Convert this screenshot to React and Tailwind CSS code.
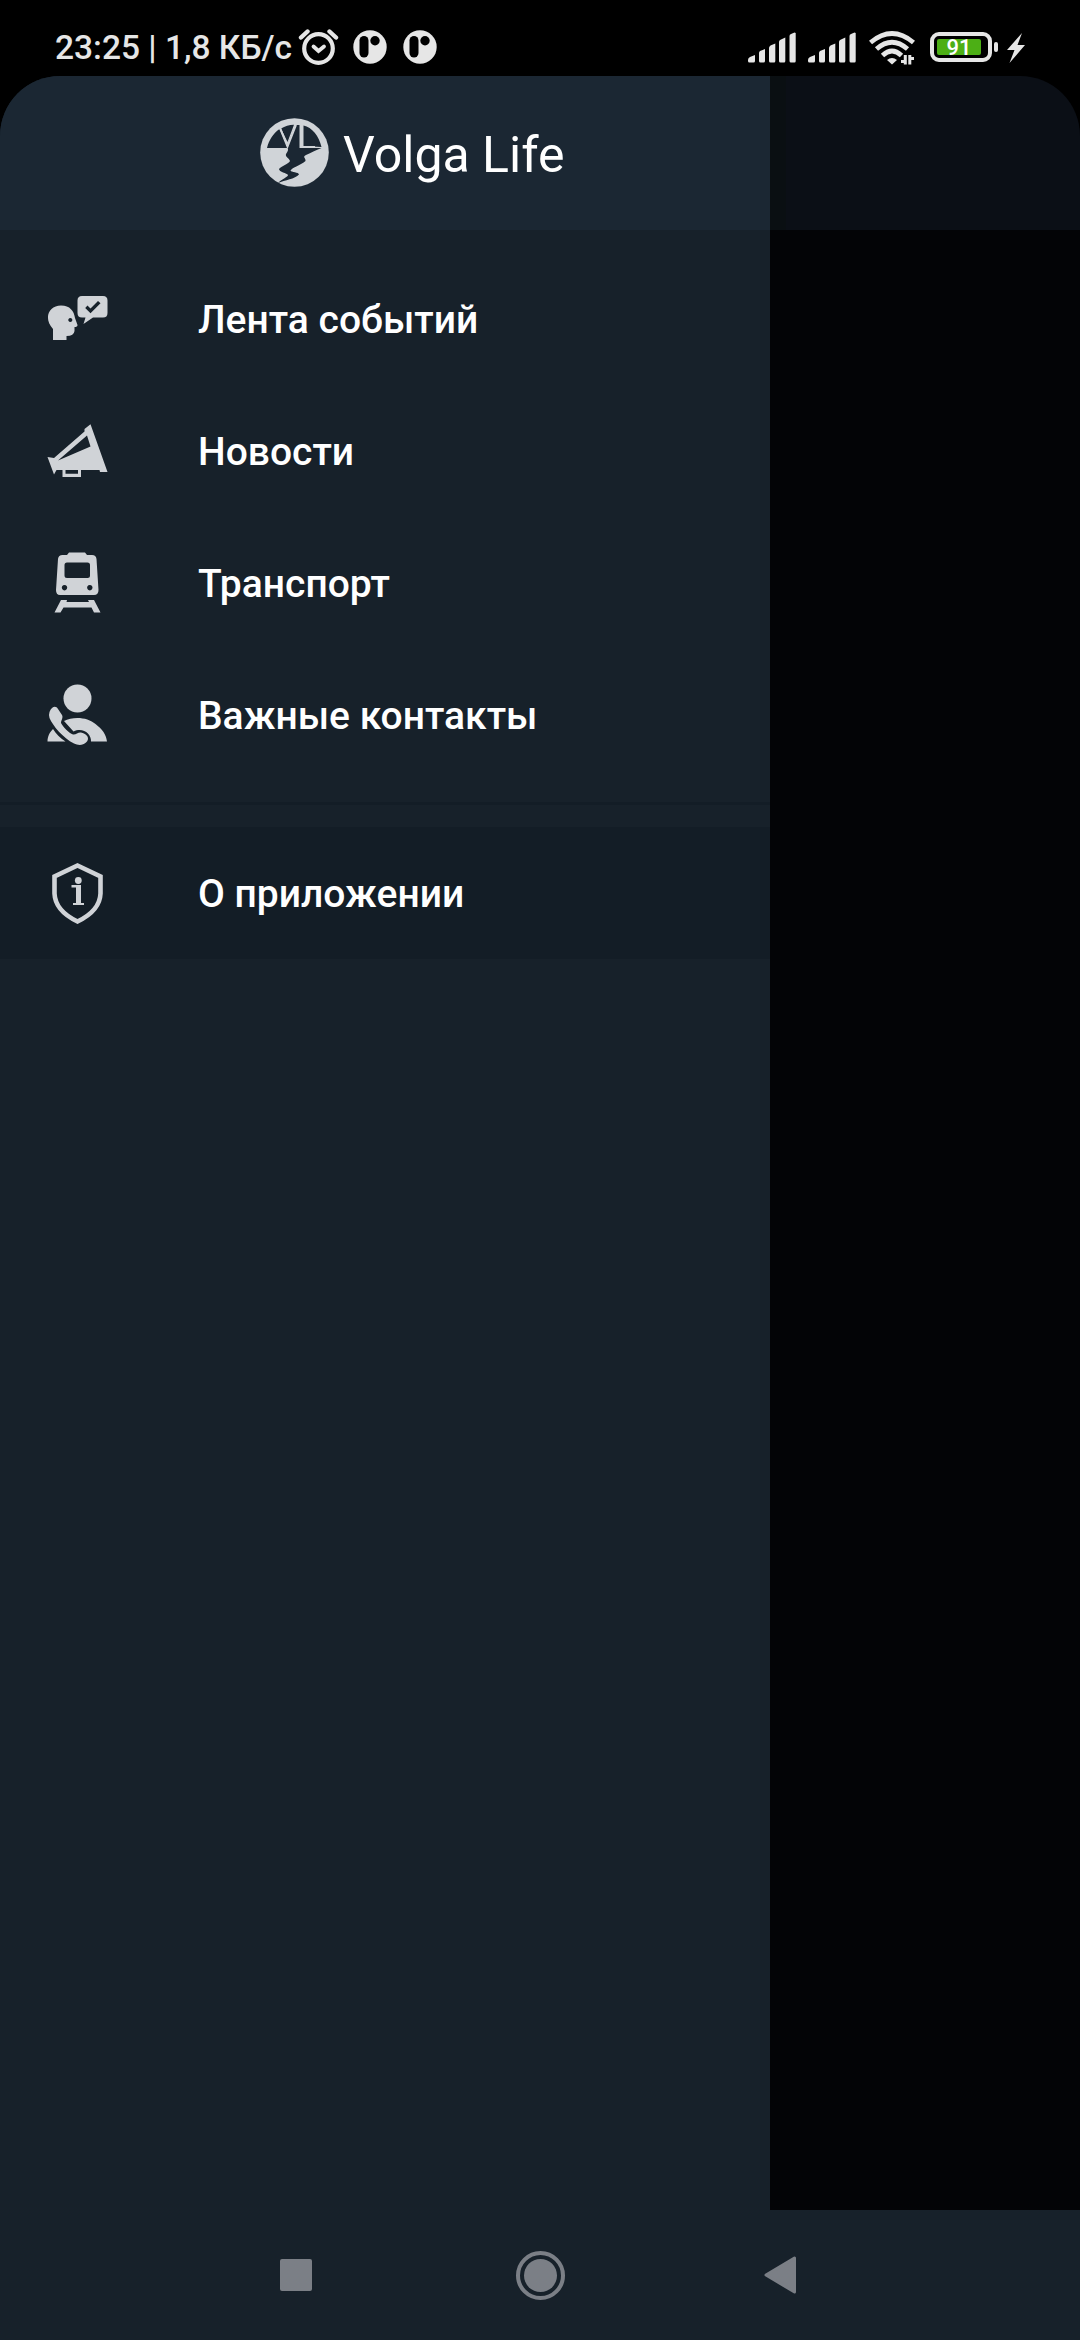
const G = "#d0d3d7";
const W = "#e6e6e6";

function Logo() {
  return (
    <svg width="70" height="70" viewBox="0 0 70 70">
      <circle cx="34.5" cy="34.5" r="34.3" fill="#d0d4d8" />
      <path d="M7 30C9 22 13 15.5 19.500 11L27 28L35.500 7H39.500V30H61.500C57 32 51 34.500 46 37C42 39 46 40 45.500 43C41 47 32 49.500 30.500 52.500C31 54.500 39 54 39 56.500C35 61 25 62 18 65C22 61 28 59 28 57C27 55 19 54 19 51C21 48 29 46 30 43C29 40 25 39 26 36C28 33 29 31 27 30Z" fill="#1b2733" />
      <path d="M21 10.500C25 8.200 29 7 34 6.800L27.500 24ZM43.500 7.600C52 9.500 59 18 61.500 29L43.500 28Z" fill="#1b2733" />
      <path d="M20 10L27.500 28.500L36 7M41.500 7V29H55" fill="none" stroke="#d0d4d8" strokeWidth="2" />
    </svg>
  );
}

function Talk() {
  return (
    <svg width="62" height="62" viewBox="0 0 62 62" fill={G}>
      <path fillRule="evenodd" d="M6 52V41C-4 30 2 17.500 14 17.500C23 17.500 27 23 28 30L30.500 37Q30.500 39 27.500 39V43Q27 48 19.500 48V52ZM23.300 30a2 2 0 1 0 .01 0Z" />
      <path fillRule="evenodd" d="M35 8H56Q60.500 8 60.500 12.500V25Q60.500 29.500 56 29.500H46L36.500 36L38.500 29.500H35Q30.500 29.500 30.500 25V12.500Q30.500 8 35 8ZM40.500 17.500L38.200 20L43.500 25.300L53.500 15.300L51 13L43.500 20.500Z" />
    </svg>
  );
}

function Megaphone() {
  return (
    <svg width="62" height="62" viewBox="0 3 62 62" fill={G}>
      <path fillRule="evenodd" d="M.5 40L7 41L37.500 14.500V12L43.500 7.300L60.500 55H53L52.500 53H34V60H15.500V53H9.500L7 57.500ZM11 43.500L43.500 29.500L40 18.500ZM18.500 53V56.700H31V53Z" />
    </svg>
  );
}

function Train() {
  return (
    <svg width="62" height="62" viewBox="0 0 62 62" fill={G}>
      <path fillRule="evenodd" d="M22 .5H38L40 3H45Q49 3 49.500 7L51.500 38Q51.500 43 47 43H13Q9 43 9 38L11 7Q11.500 3 15.500 3H20ZM20 10.500Q17.500 10.500 17.500 13V23.500Q17.500 26 20 26H40.500Q43 26 43 23.500V13Q43 10.500 40.500 10.500ZM17.500 33a2.700 2.700 0 1 0 .01 0ZM42.800 33a2.700 2.700 0 1 0 .01 0Z" />
      <path d="M14 48H20L19.500 50H42L41 48H47L53.500 60.500H47L44.500 55.500H16.500L13.500 60.500H7.500Z" />
    </svg>
  );
}

function Contact() {
  return (
    <svg width="62" height="62" viewBox="0 0 62 62" fill={G}>
      <circle cx="30.500" cy="14.500" r="14" />
      <path d="M17 37C26 32 41 33 48.500 40C55 45 59 50 60 57.500H44C44.500 50 36 43 26.500 47.500Z" />
      <path d="M2.500 28C5 22 9 21.500 11 25L15 31C16.500 34 14 36 14 39C16 43 22 49 26 50.500C29 51 31 48 34 48.500C41 50 43 55 39 58.500C36 61.500 31 61.500 27 59.500C16 54 6 42 2.500 34Q1.500 31 2.500 28Z" />
      <path d="M.5 57.500C.5 52 3 48 6 45C9 50 13 54 18.500 57.500Z" />
    </svg>
  );
}

function Shield() {
  return (
    <svg width="62" height="62" viewBox="0 -0.500 62 62">
      <path d="M30.500 3L53.500 14V31C53 44 43 53 30.500 59C18 53 8 44 7.500 31V14Z" fill="none" stroke={G} strokeWidth="4.600" />
      <circle cx="31.300" cy="18" r="3.400" fill={G} />
      <path d="M24.500 22.500H34V40.500H37V42.500H26V40.500H29V25H24.500Z" fill={G} />
    </svg>
  );
}

function Alarm() {
  return (
    <svg className="ml-1" width="42" height="38" viewBox="0 0 42 38" fill="none" stroke={W} strokeLinecap="round">
      <circle cx="20.500" cy="20.500" r="14.300" strokeWidth="4.200" />
      <path d="M3 9.500L9.500 3.500M38 9.500L31.500 3.500" strokeWidth="4.400" />
      <path d="M15.500 18.500L20.500 23L26 18.500" strokeWidth="3.800" />
    </svg>
  );
}

function Badge() {
  return (
    <svg width="34" height="34" viewBox="0 0 34 34">
      <circle cx="17" cy="17" r="16.700" fill={W} />
      <rect x="6.500" y="6" width="9" height="21.500" rx="4.500" fill="#000" />
      <circle cx="22" cy="10.800" r="4.700" fill="#000" />
    </svg>
  );
}

function Signal() {
  return (
    <svg width="48" height="31" viewBox="0 0 48 31" fill={W}>
      <path d="M0 28Q0 26 2 25L7 23V29Q7 30.500 5.500 30.500H1.500Q0 30.500 0 29ZM11 21Q11 20 12 19L17 17V29Q17 30.500 15.500 30.500H12.500Q11 30.500 11 29ZM21 16Q21 14.500 22.500 13.500L27.300 11.500V29Q27.300 30.500 26 30.500H22.500Q21 30.500 21 29ZM31 10Q31 9 32 8L37.300 5.500V29Q37.300 30.500 36 30.500H32.500Q31 30.500 31 29ZM41.500 4Q41.500 2.500 43 2L46.500 .5L47.700 1V29Q47.700 30.500 46.500 30.500H43Q41.500 30.500 41.500 29Z" />
    </svg>
  );
}

function Wifi() {
  return (
    <svg width="46" height="36" viewBox="0 0 46 36" fill="none" stroke={W} strokeWidth="4.800">
      <path d="M1.500 12.500Q23 -5.500 44.500 12.500M7.500 19Q23 5.500 38.500 19M13.500 25.500Q23 16.500 32.500 25.500" />
      <path d="M18 30Q23 26 28 30L23 34.500Z" fill={W} stroke="none" />
      <path d="M36.300 25V34.500M40.800 25V34.500M32 31.500H36M41 28.500H45" strokeWidth="3" />
    </svg>
  );
}

function Bolt() {
  return (
    <svg width="20" height="30" viewBox="0 0 20 30" fill={W}>
      <path d="M16 0L1 17H8.500L3.500 30L19 12H11.500Z" />
    </svg>
  );
}

const ITEMS = [
  ["Лента событий", Talk],
  ["Новости", Megaphone],
  ["Транспорт", Train],
  ["Важные контакты", Contact],
];

function Item({ label, Icon }) {
  return (
    <div className="flex h-[132px] items-center pl-[47px]">
      <Icon />
      <span className="ml-[89px] pt-[3px] text-[39px] font-medium whitespace-nowrap text-white">{label}</span>
    </div>
  );
}

export default function App() {
  return (
    <div className="flex h-[2340px] w-[1080px] flex-col overflow-hidden bg-black font-['Roboto',sans-serif]">
      <div className="flex h-[76px] items-start pt-7 pl-[55px]">
        <span className="mt-[3px] w-[239px] text-[33.5px] leading-[34px] font-medium whitespace-nowrap text-[#e6e6e6]">23:25 | 1,8 КБ/с</span>
        <Alarm />
        <div className="mt-[2px] ml-[13px] flex gap-4"><Badge /><Badge /></div>
        <div className="mt-1 ml-[311px] flex">
          <Signal />
          <div className="ml-3"><Signal /></div>
        </div>
        <div className="mt-[2px] ml-[13px]"><Wifi /></div>
        <div className="mt-1 ml-[15px] flex items-center">
          <div className="flex h-[30px] w-[62px] items-center rounded-[9px] border-4 border-[#e6e6e6] px-[3px]">
            <div className="flex h-4 w-11 items-center justify-center rounded-xs bg-[#4caf15] pt-[2px] text-[22px] leading-none font-medium text-white">91</div>
          </div>
          <div className="ml-[2px] h-[10px] w-1 rounded-full bg-[#e6e6e6]" />
        </div>
        <div className="mt-[5px] ml-2"><Bolt /></div>
      </div>
      <div className="flex h-[2134px] overflow-hidden rounded-t-[60px]">
        <div className="flex w-[770px] flex-col bg-[#17212a]">
          <div className="flex h-[154px] items-center bg-[#1b2733] pl-[260px]">
            <Logo />
            <span className="ml-[13px] pt-1 text-[50px] whitespace-nowrap text-white">Volga Life</span>
          </div>
          <div className="pt-[23px]">
            {ITEMS.map(([label, Icon]) => <Item key={label} label={label} Icon={Icon} />)}
          </div>
          <div className="mt-[21px] h-[3px] bg-[#131d26]" />
          <div className="mt-[22px] bg-[#131d26]"><Item label="О приложении" Icon={Shield} /></div>
        </div>
        <div className="flex flex-1 flex-col bg-[#030406]">
          <div className="h-[154px] bg-[#0b0f16]">
            <div className="h-full w-4 bg-[#0a0f12]" />
          </div>
        </div>
      </div>
      <div className="flex h-[130px] items-center bg-[#17212a] pl-[280px]">
        <div className="h-8 w-8 rounded-xs bg-[#7b7f86]" />
        <div className="ml-[204px] flex h-[49px] w-[49px] items-center justify-center rounded-full border-4 border-[#7b7f86]">
          <div className="h-[33px] w-[33px] rounded-full bg-[#7b7f86]" />
        </div>
        <svg className="ml-[199px]" width="32" height="38" viewBox="0 0 32 38" fill="#7b7f86" stroke="#7b7f86" strokeWidth="3" strokeLinejoin="round">
          <path d="M2 19L30.500 2V36Z" />
        </svg>
      </div>
    </div>
  );
}
